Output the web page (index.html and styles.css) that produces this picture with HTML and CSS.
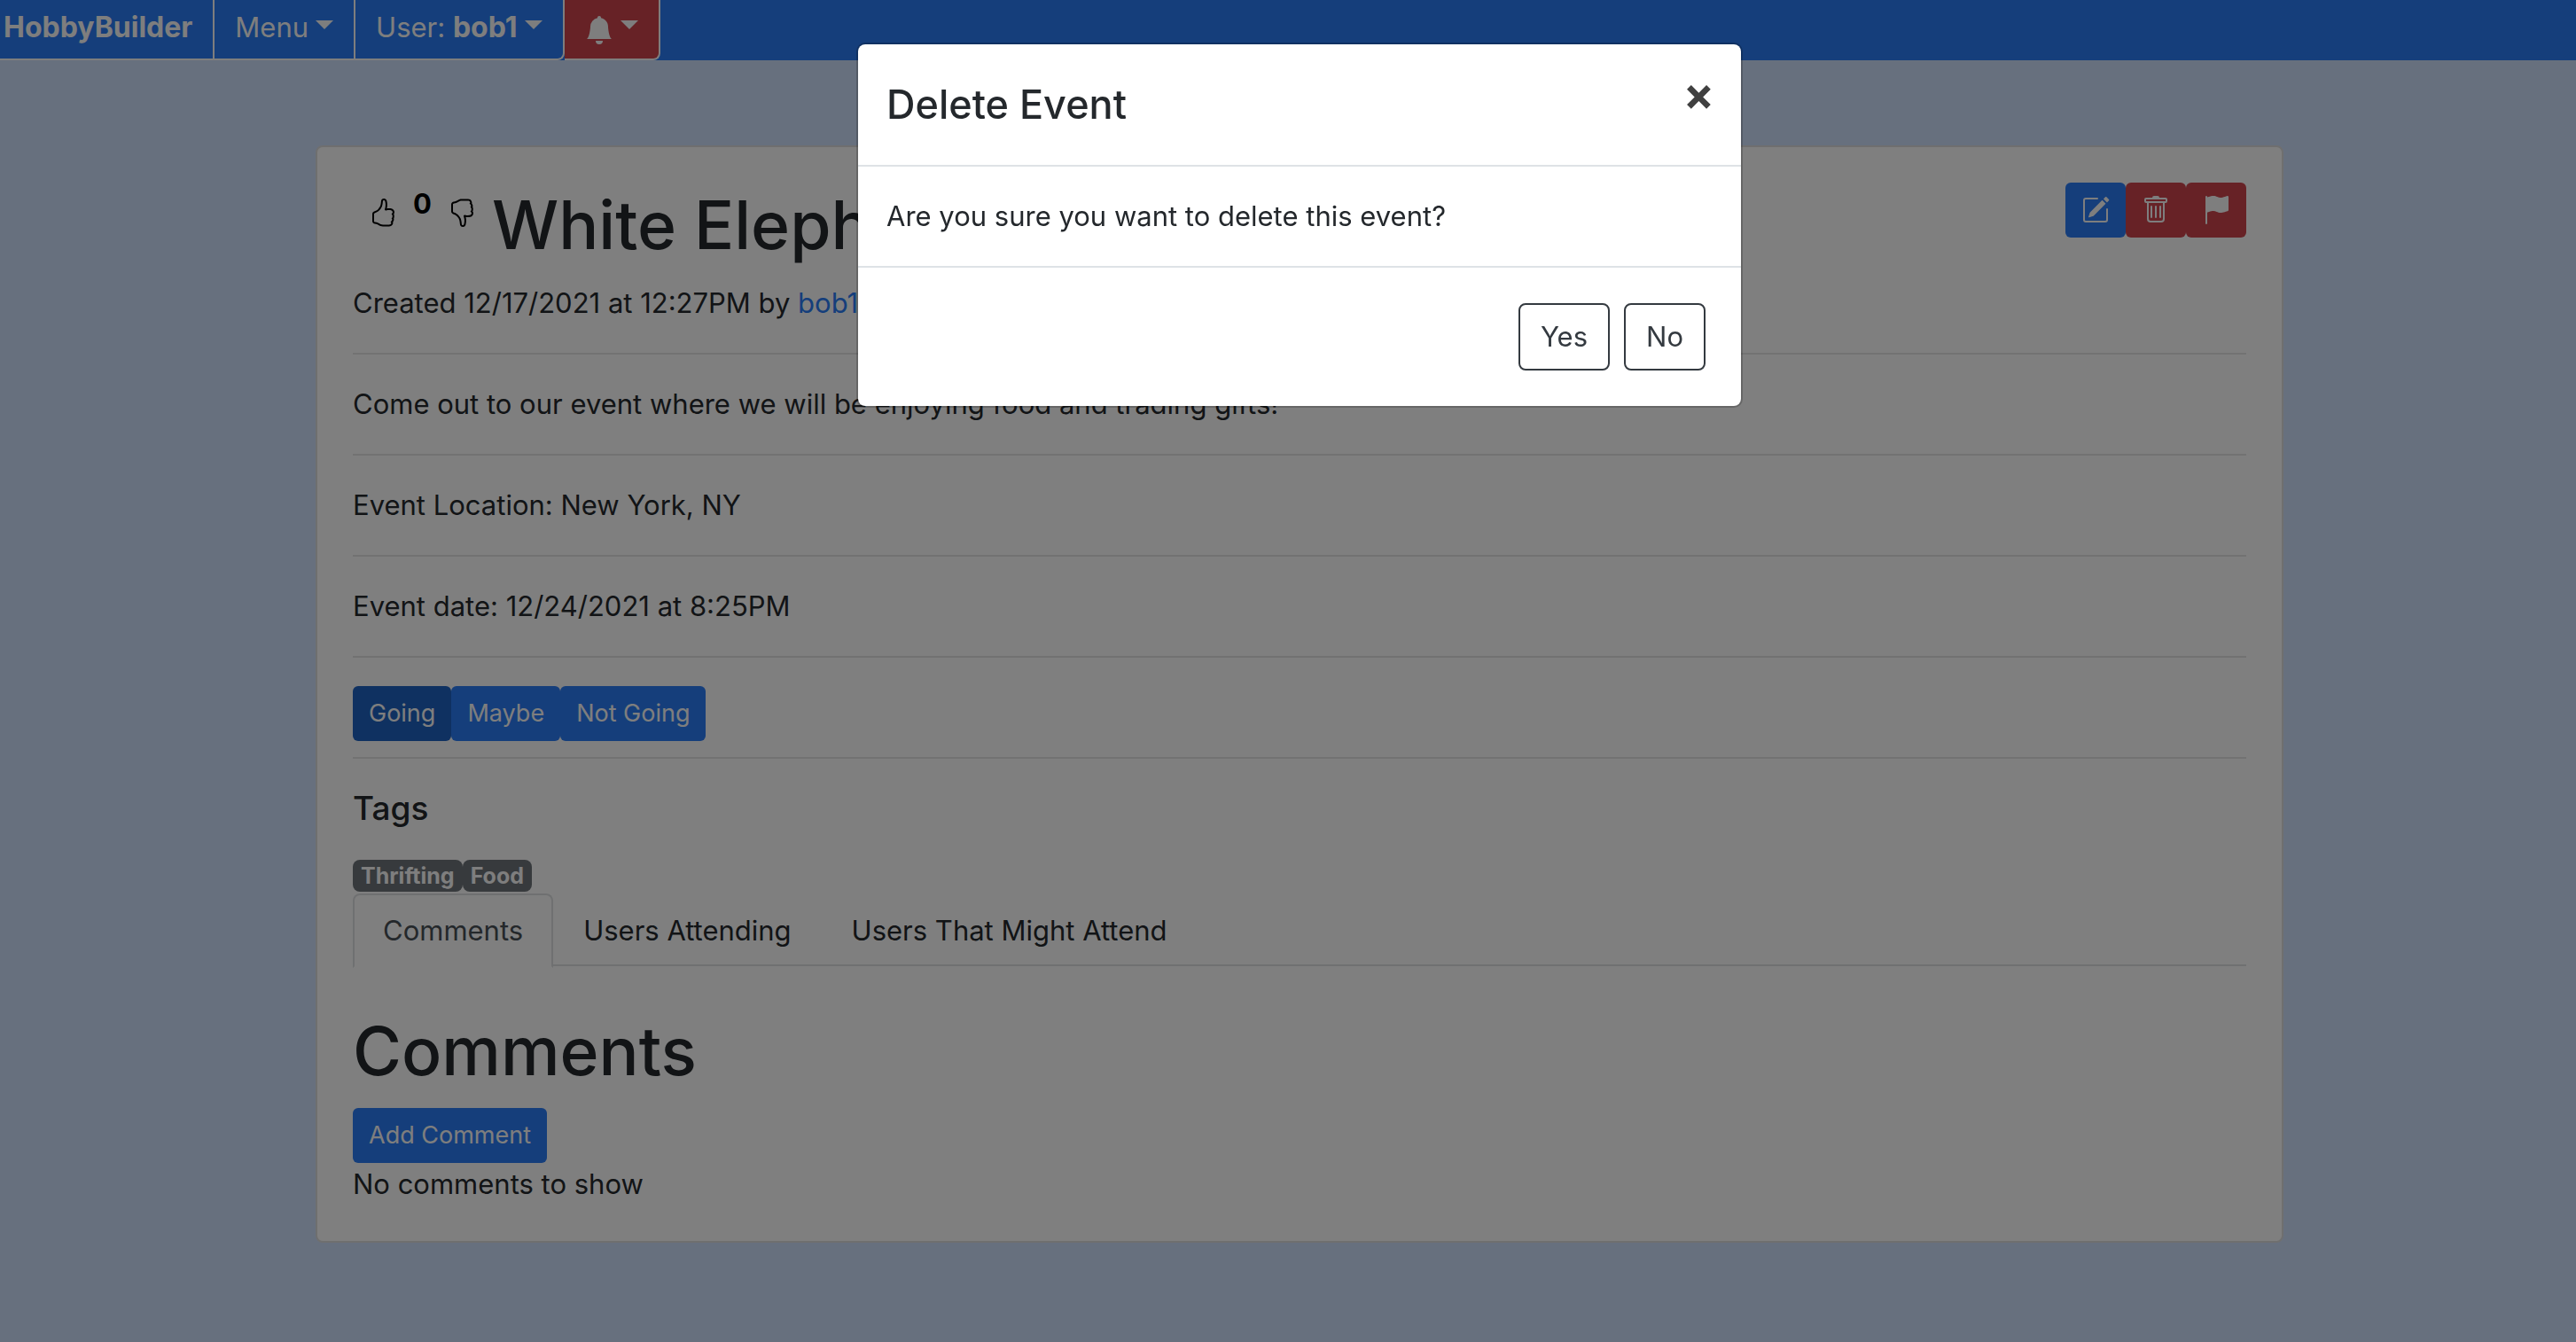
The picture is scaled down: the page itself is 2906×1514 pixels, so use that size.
FILE: index.html
```html
<!DOCTYPE html>
<html lang="en">
<head>
<meta charset="utf-8">
<title>HobbyBuilder</title>
<link rel="stylesheet" href="styles.css">
</head>
<body>
<nav class="navbar">
  <a class="nav-button nav-brand" href="#">HobbyBuilder</a>
  <button class="nav-button caret" type="button">Menu</button>
  <button class="nav-button nav-last caret" type="button">User: <b class="nav-user">bob1</b></button>
  <button class="nav-button nav-last nav-alert caret" type="button" aria-label="Notifications">
    <svg class="icon" viewBox="0 0 16 16"><path d="M8 16a2 2 0 0 0 2-2H6a2 2 0 0 0 2 2zm.995-14.901a1 1 0 1 0-1.99 0A5.002 5.002 0 0 0 3 6c0 1.098-.5 6-2 7h14c-1.5-1-2-5.902-2-7 0-2.42-1.72-4.44-4.005-4.901z"/></svg>
  </button>
</nav>

<main class="container">
  <article class="card">
    <header class="event-header">
      <div class="votes">
        <button class="vote" type="button" aria-label="Like">
          <svg class="icon" viewBox="0 0 16 16"><path id="thumb" d="M8.864.046C7.908-.193 7.02.53 6.956 1.466c-.072 1.051-.23 2.016-.428 2.59-.125.36-.479 1.013-1.04 1.639-.557.623-1.282 1.178-2.131 1.41C2.685 7.288 2 7.87 2 8.72v4.001c0 .845.682 1.464 1.448 1.545 1.07.114 1.564.415 2.068.723l.048.03c.272.165.578.348.97.484.397.136.861.217 1.466.217h3.5c.937 0 1.599-.477 1.934-1.064a1.86 1.86 0 0 0 .254-.912c0-.152-.023-.312-.077-.464.201-.263.38-.578.488-.901.11-.33.172-.762.004-1.149.069-.13.12-.269.159-.403.077-.27.113-.568.113-.857 0-.288-.036-.585-.113-.856a2.144 2.144 0 0 0-.138-.362 1.9 1.9 0 0 0 .234-1.734c-.206-.592-.682-1.1-1.2-1.272-.847-.282-1.803-.276-2.516-.211a9.84 9.84 0 0 0-.443.05 9.365 9.365 0 0 0-.062-4.509A1.38 1.38 0 0 0 9.125.111L8.864.046zM11.5 14.721H8c-.51 0-.863-.069-1.14-.164-.281-.097-.506-.228-.776-.393l-.04-.024c-.555-.339-1.198-.731-2.49-.868-.333-.036-.554-.29-.554-.55V8.72c0-.254.226-.543.62-.65 1.095-.3 1.977-.996 2.614-1.708.635-.71 1.064-1.475 1.238-1.978.243-.7.407-1.768.482-2.85.025-.362.36-.594.667-.518l.262.066c.16.04.258.143.288.255a8.34 8.34 0 0 1-.145 4.725.5.5 0 0 0 .595.644l.003-.001.014-.003.058-.014a8.908 8.908 0 0 1 1.036-.157c.663-.06 1.457-.054 2.11.164.175.058.45.3.57.65.107.308.087.67-.266 1.022l-.353.353.353.354c.043.043.105.141.154.315.048.167.075.37.075.581 0 .212-.027.414-.075.582-.05.174-.111.272-.154.315l-.353.353.353.354c.047.047.109.177.005.488a2.224 2.224 0 0 1-.505.805l-.353.353.353.354c.006.005.041.05.041.17a.866.866 0 0 1-.121.416c-.165.288-.503.56-1.066.56z"/></svg>
        </button>
        <b class="score">0</b>
        <button class="vote" type="button" aria-label="Dislike">
          <svg class="icon" viewBox="0 0 16 16"><use href="#thumb" transform="matrix(1 0 0 -1 0 16)"/></svg>
        </button>
      </div>
      <h1 class="title">White Elephant</h1>
      <div class="button-row actions">
        <button class="button" type="button" aria-label="Edit">
          <svg class="icon" viewBox="0 0 16 16"><path d="M15.502 1.94a.5.5 0 0 1 0 .706L14.459 3.69l-2-2L13.502.646a.5.5 0 0 1 .707 0l1.293 1.293zm-1.75 2.456-2-2L4.939 9.21a.5.5 0 0 0-.121.196l-.805 2.414a.25.25 0 0 0 .316.316l2.414-.805a.5.5 0 0 0 .196-.12l6.813-6.814z"/><path d="M1 13.5A1.5 1.5 0 0 0 2.5 15h11a1.5 1.5 0 0 0 1.5-1.5v-6a.5.5 0 0 0-1 0v6a.5.5 0 0 1-.5.5h-11a.5.5 0 0 1-.5-.5v-11a.5.5 0 0 1 .5-.5H9a.5.5 0 0 0 0-1H2.5A1.5 1.5 0 0 0 1 2.5v11z"/></svg>
        </button>
        <button class="button danger" type="button" aria-label="Delete">
          <svg class="icon" viewBox="0 0 16 16"><path d="M5.5 5.5A.5.5 0 0 1 6 6v6a.5.5 0 0 1-1 0V6a.5.5 0 0 1 .5-.5zm2.5 0a.5.5 0 0 1 .5.5v6a.5.5 0 0 1-1 0V6a.5.5 0 0 1 .5-.5zm3 .5a.5.5 0 0 0-1 0v6a.5.5 0 0 0 1 0V6z"/><path fill-rule="evenodd" d="M14.5 3a1 1 0 0 1-1 1H13v9a2 2 0 0 1-2 2H5a2 2 0 0 1-2-2V4h-.5a1 1 0 0 1-1-1V2a1 1 0 0 1 1-1H6a1 1 0 0 1 1-1h2a1 1 0 0 1 1 1h3.5a1 1 0 0 1 1 1v1zM4.118 4 4 4.059V13a1 1 0 0 0 1 1h6a1 1 0 0 0 1-1V4.059L11.882 4H4.118zM2.5 3V2h11v1h-11z"/></svg>
        </button>
        <button class="button danger" type="button" aria-label="Report">
          <svg class="icon" viewBox="0 0 16 16"><path d="M14.778.085A.5.5 0 0 1 15 .5V8a.5.5 0 0 1-.314.464c-.6.24-2.86 1.036-4.186 1.036-.847 0-1.548-.28-2.158-.525C7.68 8.71 7.14 8.5 6.5 8.5c-.7 0-1.638.23-2.437.477A19.626 19.626 0 0 0 3 9.342V15.5a.5.5 0 0 1-1 0V.5a.5.5 0 0 1 1 0v.282c.226-.079.496-.17.79-.26C4.606.272 5.67 0 6.5 0c.84 0 1.524.277 2.121.519C9.286.788 9.828 1 10.5 1c.7 0 1.638-.23 2.437-.477a19.587 19.587 0 0 0 1.349-.476z"/></svg>
        </button>
      </div>
    </header>
    <p class="text">Created 12/17/2021 at 12:27PM by <a class="link" href="#">bob1</a></p>
    <hr class="rule">
    <p class="text">Come out to our event where we will be enjoying food and trading gifts!</p>
    <hr class="rule">
    <p class="text">Event Location: New York, NY</p>
    <hr class="rule">
    <p class="text">Event date: 12/24/2021 at 8:25PM</p>
    <hr class="rule">
    <div class="button-row">
      <button class="button active" type="button">Going</button>
      <button class="button" type="button">Maybe</button>
      <button class="button" type="button">Not Going</button>
    </div>
    <hr class="rule rule-close">
    <h5 class="subheading">Tags</h5>
    <div class="tags"><span class="badge">Thrifting</span><span class="badge">Food</span></div>
    <div class="tabs">
      <a class="tab tab-active" href="#">Comments</a>
      <a class="tab" href="#">Users Attending</a>
      <a class="tab" href="#">Users That Might Attend</a>
    </div>
    <section class="comments">
      <h1 class="title">Comments</h1>
      <button class="button" type="button">Add Comment</button>
      <p class="text">No comments to show</p>
    </section>
  </article>
</main>

<div class="backdrop">
  <div class="modal" role="dialog" aria-labelledby="modal-title">
    <div class="modal-header">
      <h5 class="modal-title" id="modal-title">Delete Event</h5>
      <button class="close" type="button" aria-label="Close">×</button>
    </div>
    <div class="modal-body"><p class="text">Are you sure you want to delete this event?</p></div>
    <div class="modal-footer">
      <button class="outline" type="button">Yes</button>
      <button class="outline" type="button">No</button>
    </div>
  </div>
</div>
</body>
</html>
```
FILE: styles.css
```css
:root {
  --blue: #2a7cf6;
  --red: #ce444c;
  --ink: #24282c;
  --light: #fdfdfd;
}

* { box-sizing: border-box; }

body {
  margin: 0;
  min-height: 100vh;
  background: #cfe0fc;
  color: var(--ink);
  font: 31px/48px Inter, "Liberation Sans", sans-serif;
}

button { font: inherit; cursor: pointer; }
a { text-decoration: none; }
h1, h5, p { margin: 0; }

.icon {
  display: block;
  width: 32px;
  height: 32px;
  fill: currentColor;
}

/* Navigation */
.navbar {
  display: flex;
  background: var(--blue);
}

.nav-button {
  display: flex;
  align-items: center;
  padding: 7px 23px 11px;
  border: 0 solid var(--light);
  border-width: 0 2px 2px 0;
  background: var(--blue);
  color: var(--light);
  white-space: pre;
}

.nav-brand,
.nav-user {
  font-size: 32px;
  font-weight: 700;
}

.nav-brand { padding-left: 4px; }
.nav-last { border-bottom-right-radius: 8px; }
.nav-alert { background: var(--red); }
.nav-alert .icon { margin-top: 6px; }

.caret::after {
  content: "";
  margin: 0 0 6px 8px;
  border: 10px solid transparent;
  border-top-color: currentColor;
  border-bottom: 0;
}

/* Event card */
.container {
  max-width: 2246px;
  margin: 0 auto;
  padding: 96px 0 112px 26px;
}

.card {
  padding: 40px;
  border: 2px solid #dfdfdf;
  border-radius: 8px;
  background: #fff;
}

.event-header {
  display: flex;
  align-items: flex-start;
  margin-bottom: 16px;
}

.votes {
  display: flex;
  color: #000;
}

.vote {
  padding: 18px;
  border: 0;
  background: none;
  color: inherit;
}

.title {
  font-size: 75px;
  font-weight: 500;
  line-height: 96px;
}

.button-row { display: flex; }
.actions { margin-left: auto; }

.button {
  height: 62px;
  padding: 0 18px;
  border: 0;
  border-radius: 6px;
  background: var(--blue);
  color: var(--light);
  font-size: 27px;
  line-height: 42px;
}

.danger { background: var(--red); }
.active { background: #1e62c2; }
.link { color: var(--blue); }

.rule {
  margin: 32px 0;
  border: 0;
  border-top: 2px solid #e5e5e5;
}

.rule-close { margin-top: 18px; }

.subheading {
  margin-bottom: 16px;
  font-size: 37px;
  font-weight: 500;
}

.tags {
  display: flex;
  padding: 18px 0 2px;
}

.badge {
  padding: 6px 9px;
  border-radius: 8px;
  background: #6e747a;
  color: var(--light);
  font-size: 25px;
  font-weight: 700;
  line-height: 24px;
}

.tabs {
  display: flex;
  border-bottom: 2px solid #dfe1e3;
}

.tab {
  margin-bottom: -4px;
  padding: 16px 32px;
  border: 2px solid transparent;
  border-radius: 8px 8px 0 0;
  color: var(--ink);
}

.tab-active {
  border-color: #dfe1e3 #dfe1e3 #fff;
  background: #fff;
  color: #495057;
}

.comments { padding-top: 48px; }
.comments .title { margin-bottom: 16px; }

/* Modal dialog */
.backdrop {
  position: fixed;
  inset: 0;
  padding: 48px 0 0 26px;
  background: rgba(0, 0, 0, .5);
}

.modal {
  max-width: 1000px;
  margin: 0 auto;
  border: 2px solid rgba(0, 0, 0, .2);
  border-radius: 10px;
  background: #fff;
  background-clip: padding-box;
}

.modal-header {
  display: flex;
  justify-content: space-between;
  align-items: flex-start;
  padding: 32px;
  border-bottom: 2px solid #dee2e6;
}

.modal-title {
  font-size: 45px;
  font-weight: 500;
  line-height: 72px;
}

.close {
  margin: -32px;
  padding: 32px 30px;
  border: 0;
  background: none;
  color: #404040;
  font-size: 52px;
  font-weight: 700;
}

.modal-body { padding: 32px; }

.modal-footer {
  display: flex;
  justify-content: flex-end;
  gap: 16px;
  padding: 40px;
  border-top: 2px solid #dee2e6;
}

.outline {
  padding: 12px 23px;
  border: 2px solid #343a40;
  border-radius: 8px;
  background: none;
  color: #343a40;
}
```
